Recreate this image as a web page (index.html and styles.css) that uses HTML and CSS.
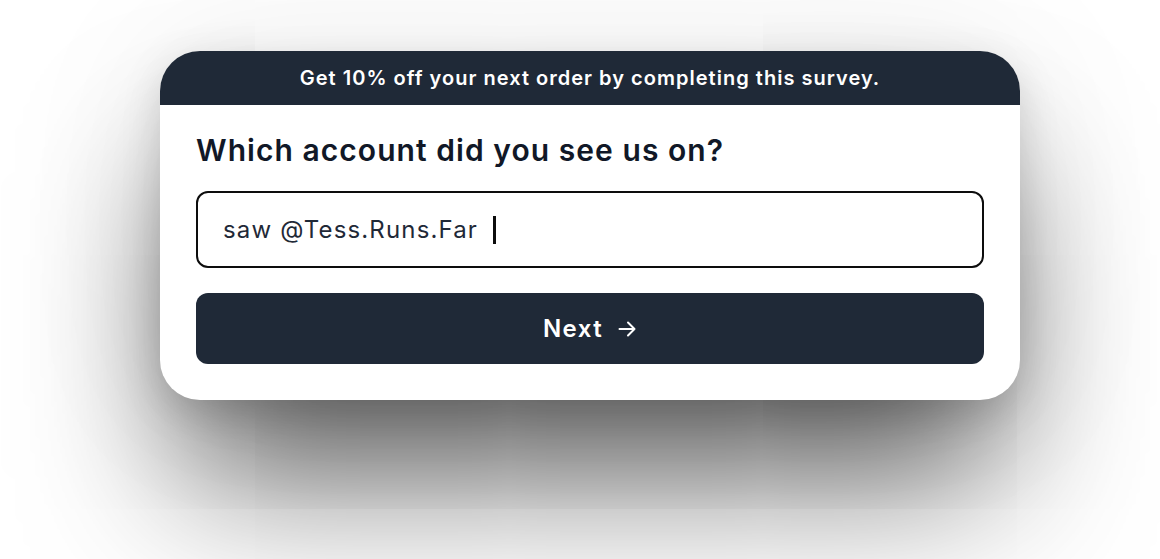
FILE: index.html
```html
<!DOCTYPE html>
<html>
<head>
<meta charset="utf-8">
<link rel="stylesheet" href="styles.css">
</head>
<body>
<div class="stage">
  <div class="card">
    <div class="banner">Get 10% off your next order by completing this survey.</div>
    <div class="content">
      <h1 class="question">Which account did you see us on?</h1>
      <div class="field"><span class="value">saw @Tess.Runs.Far</span><span class="caret"></span></div>
      <button class="next"><span class="label">Next</span>
        <svg class="arrow" width="20" height="20" viewBox="0 0 20 20" fill="none" stroke="currentColor" stroke-width="2" stroke-linecap="round" stroke-linejoin="round"><path d="M2.5 10h15M11 3.5l6.5 6.5-6.5 6.5"/></svg>
      </button>
    </div>
  </div>
</div>
</body>
</html>
```

FILE: styles.css
```css
html, body {
  margin: 0;
  padding: 0;
  background: #ffffff;
  font-family: Inter, "Noto Sans", sans-serif;
}
.stage {
  width: 1160px;
  height: 559px;
  overflow: hidden;
  padding: 51px 0 0 160px;
  box-sizing: border-box;
}
.card {
  width: 860px;
  height: 349px;
  background: #ffffff;
  border-radius: 40px;
  overflow: hidden;
  box-shadow: 0 100px 150px -20px rgba(0, 0, 0, 0.62), 0 12px 40px rgba(0, 0, 0, 0.14), 0 0 150px rgba(0, 0, 0, 0.08);
  display: flex;
  flex-direction: column;
}
.banner {
  height: 54px;
  background: #1f2937;
  color: #ffffff;
  font-size: 20px;
  font-weight: 600;
  letter-spacing: 1.02px;
  display: flex;
  align-items: center;
  justify-content: center;
}
.content {
  padding: 26px 36px 36px;
  display: flex;
  flex-direction: column;
}
.question {
  margin: 0 0 22px;
  font-size: 30px;
  font-weight: 600;
  letter-spacing: 1.05px;
  color: #111827;
  line-height: 38px;
}
.field {
  height: 77px;
  box-sizing: border-box;
  border: 2.75px solid #0d0d0d;
  border-radius: 12px;
  display: flex;
  align-items: center;
  padding-left: 25px;
  font-size: 24px;
  letter-spacing: 1.15px;
  color: #1f2937;
}
.caret {
  width: 2.5px;
  height: 28px;
  background: #0d0d0d;
  margin-left: 15px;
}
.next {
  margin-top: 25px;
  height: 71px;
  border: none;
  border-radius: 12px;
  background: #1f2937;
  color: #ffffff;
  font-family: Inter, "Noto Sans", sans-serif;
  font-size: 24px;
  font-weight: 600;
  letter-spacing: 1.4px;
  display: flex;
  align-items: center;
  justify-content: center;
  gap: 14px;
}
.arrow {
  display: block;
}
```
